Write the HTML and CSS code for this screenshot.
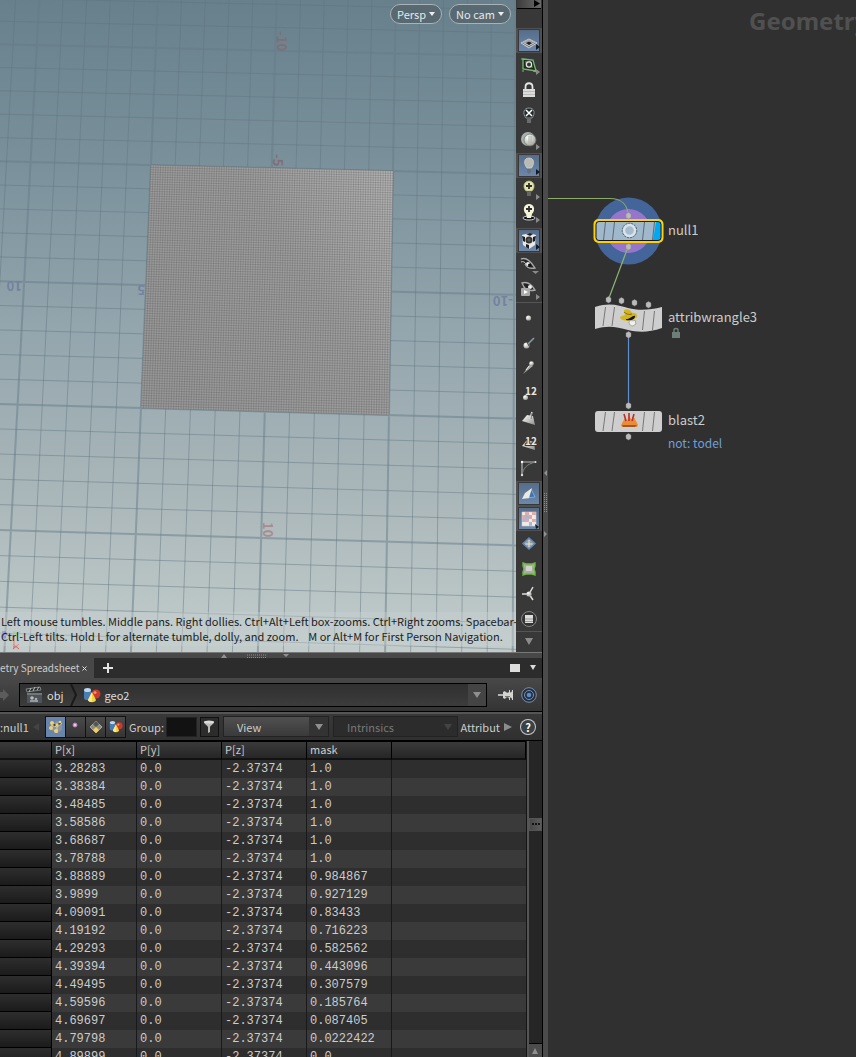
FILE: index.html
```html
<!DOCTYPE html>
<html lang="en">
<head>
<meta charset="utf-8">
<title>Geometry</title>
<link rel="stylesheet" href="styles.css">
</head>
<body>
<svg class="defs" width="0" height="0" aria-hidden="true">
  <defs>
    <linearGradient id="sky" x1="0" y1="0" x2="0" y2="1">
      <stop offset="0" stop-color="#67808c"/><stop offset=".25" stop-color="#7a919b"/>
      <stop offset=".5" stop-color="#93a5ad"/><stop offset=".75" stop-color="#a9b6b9"/>
      <stop offset="1" stop-color="#c2cccb"/>
    </linearGradient>
    <linearGradient id="sheet" x1="0" y1=".6" x2="1" y2="0">
      <stop offset="0" stop-color="#9a9a9a"/><stop offset=".55" stop-color="#9f9f9f"/><stop offset="1" stop-color="#b4b4b4"/>
    </linearGradient>
    <linearGradient id="metal" x1="0" y1="0" x2="1" y2="1">
      <stop offset="0" stop-color="#fff"/><stop offset="1" stop-color="#8c8c88"/>
    </linearGradient>
    <radialGradient id="ball" cx=".35" cy=".3" r=".8">
      <stop offset="0" stop-color="#fff"/><stop offset="1" stop-color="#96968f"/>
    </radialGradient>
    <symbol id="fly" viewBox="0 0 26 25"><path d="M20 16l4 3-4 3z"/></symbol>
    <symbol id="shapes" viewBox="0 0 18 16">
      <path d="M1 3v8c0 3 7 3 7 0V3z" fill="#4a7cb8"/><ellipse cx="4.500" cy="3" rx="3.500" ry="2" fill="#bcd8ee"/>
      <circle cx="13" cy="7" r="4.500" fill="#c93a2c"/><circle cx="12" cy="5.500" r="1.500" fill="#ee8c78"/>
      <path d="M9 5l4 8c-1 3-7 3-8 0z" fill="#f2d43c"/><path d="M9 5l0 10c-2 0-4-1-4-2z" fill="#fbeb90"/>
    </symbol>
  </defs>
</svg>
<div class="app">
  <section class="left">
    <div class="scene">
      <div class="viewport">
        <svg class="world" id="world" viewBox="0 0 516 652" preserveAspectRatio="xMinYMin slice">
          <rect width="516" height="652" fill="url(#sky)"/>
          <g id="grid"></g>
          <g id="mesh"></g>
          <g class="axis-x">
            <text transform="translate(277 31) rotate(90)">-10</text>
            <text transform="translate(273 154) rotate(90)">-5</text>
            <text transform="translate(263 522) rotate(90)" fill="#a98c8e">10</text>
          </g>
          <g class="axis-z">
            <text transform="translate(22 281) rotate(180)">10</text>
            <text transform="translate(145 285) rotate(180)">5</text>
            <text transform="translate(513 296) rotate(180)">-10</text>
          </g>
        </svg>
        <div class="cameras">
          <button class="pill">Persp<span class="caret"></span></button>
          <button class="pill">No cam<span class="caret"></span></button>
        </div>
        <svg class="gnomon" viewBox="0 0 24 22" width="24" height="22" fill="none">
          <path d="M12 7L1 7" stroke="#7a86e8"/><path d="M14 8v12" stroke="#f44"/><path d="M14 4l-1 4" stroke="#5fdc5f"/>
          <path d="M2 4h4l-4 5h4" stroke="#3b3bf0"/><path d="M14 3l3 4M20 3l-4 6" stroke="#6fdc6f"/><path d="M13 16l6 5M19 16l-6 5" stroke="#e25a5a"/>
        </svg>
        <p class="hint">Left mouse tumbles. Middle pans. Right dollies. Ctrl+Alt+Left box-zooms. Ctrl+Right zooms. Spacebar-<br>Ctrl-Left tilts. Hold L for alternate tumble, dolly, and zoom. &nbsp;&nbsp; M or Alt+M for First Person Navigation.</p>
      </div>
      <nav class="tools">
        <button class="expand" aria-label="Expand"><svg viewBox="0 0 24 8" width="24" height="8"><path d="M17 0l6 3.500-6 3.500z" fill="#000"/></svg></button>
        <div class="group">
          <button class="tool on" aria-label="Grid"><svg viewBox="0 0 26 25"><path d="M5 15l8-4 8 4-8 5z" fill="#6f767b" stroke="#ddd" stroke-width=".8"/><path d="M9 13l8 4.500M17 13l-8 4.500M7 14l8 4.500M11 12l8 4.500M15 12l-8 4.500M19 14l-8 4.500" stroke="#d4d4d4" stroke-width=".7"/><path d="M10 15l3-1.500 3 1.500-3 2z" fill="#222"/><use href="#fly" fill="#151a20"/></svg></button>
          <button class="tool" aria-label="Construction plane"><svg viewBox="0 0 26 25"><path d="M7 6l10 1 3 11-13-2z" fill="#1e2a1e" stroke="#79b870" stroke-width="1.300"/><path d="M9 8l6 0 2 7-7-1z" fill="#5d6b5e"/><circle cx="13" cy="11.500" r="2.600" fill="#2d3a2e" stroke="#e4e4e4" stroke-width="1.200"/><path d="M5 6l2 0M17 18l4 1M7 17v2" stroke="#79b870"/><use href="#fly" fill="#8a8a8a"/></svg></button>
          <button class="tool" aria-label="Lock"><svg viewBox="0 0 26 25"><path d="M9.500 12V9c0-5 7-5 7 0v3" fill="none" stroke="#e6e6e6" stroke-width="1.800"/><path d="M7 11h12v8H7z" fill="#dcdcda"/><path d="M7 13.500h12M7 16.500h12" stroke="#bbb"/></svg></button>
          <button class="tool" aria-label="No lights"><svg viewBox="0 0 26 25"><path d="M10 15C6 10 8 5 13 5s7 5 3 10z" fill="#252a2c" stroke="#8b9597"/><path d="M10 7l6 6M16 7l-6 6" stroke="#fff" stroke-width="1.500"/><path d="M11 16h4v4h-4z" fill="#6c6c6c"/></svg></button>
          <button class="tool" aria-label="Headlight"><svg viewBox="0 0 26 25"><circle cx="12" cy="11" r="7" fill="#a9b1ab"/><circle cx="14" cy="12" r="6" fill="url(#ball)" stroke="#68706a" stroke-width=".7"/><path d="M13 8v7M15 8v7" stroke="#aaa"/><use href="#fly" fill="#8a8a8a"/></svg></button>
          <button class="tool on" aria-label="Normal lighting"><svg viewBox="0 0 26 25"><path d="M11 15C7 10 8 5 13 5s6 5 2.500 10z" fill="#babab4" stroke="#d6d6d0" stroke-width=".7"/><path d="M11 16h4v3l-2 2-2-2z" fill="#6a7076"/><use href="#fly" fill="#151a20"/></svg></button>
          <button class="tool low" aria-label="High quality lighting"><svg viewBox="0 0 26 25"><path d="M10 13C6 9 8 3 13 3s7 6 3 10z" fill="#e4e5a8" stroke="#aaa875" stroke-width=".7"/><path d="M13 5v6M10 8h6" stroke="#303030" stroke-width="1.800"/><path d="M11 14h4v4h-4z" fill="#666"/><use href="#fly" fill="#8a8a8a"/></svg></button>
          <button class="tool low" aria-label="Lighting with shadows"><svg viewBox="0 0 26 25"><ellipse cx="13" cy="17" rx="6" ry="2" fill="#111" stroke="#d6d6d6"/><path d="M10 13C6 9 8 3 13 3s7 6 3 10l-1 4h-4z" fill="#f4f4d8"/><path d="M13 5v6M10 8h6" stroke="#303030" stroke-width="1.800"/><use href="#fly" fill="#8a8a8a"/></svg></button>
        </div>
        <div class="group">
          <button class="tool on" aria-label="Materials"><svg viewBox="0 0 26 25"><path d="M6 7l7-2 7 2-1 10-6 4-6-4z" fill="#e9e9e9"/><path d="M10 6l4-1 3 1-3 2zM6 8l3 1v5l-2-1zM17 9l3-1-1 5-2 1zM10 16l3 1v4l-3-2z" fill="#1d1d1d"/><circle cx="13" cy="12" r="3.500" fill="#333"/><circle cx="13" cy="12" r="1.800" fill="#555"/><use href="#fly" fill="#151a20"/></svg></button>
          <button class="tool" aria-label="Ghost objects"><svg viewBox="0 0 26 25"><path d="M5 6c5-2 9 1 14 9-5 1-8 0-10-4" fill="#222" stroke="#a9a9a9" stroke-width="1.400"/><path d="M5 9c2-1 4 0 5 2" fill="none" stroke="#ccc"/><circle cx="12" cy="11" r="2" fill="#eee"/><circle cx="13.500" cy="12" r="1.500" fill="#111"/><path d="M16 18h7l-3.500 3z" fill="#8a8a8a"/></svg></button>
          <button class="tool" aria-label="Render view"><svg viewBox="0 0 26 25"><path d="M6 5c6-2 10 2 13 7-4 1-8 1-11-3z" fill="#222" stroke="#aaa" stroke-width="1.400"/><circle cx="14" cy="9" r="2" fill="#eee"/><rect x="5" y="10" width="9" height="8" rx="1" fill="#aaa"/><path d="M8 12l4 2-4 2z" fill="#fff"/><use href="#fly" fill="#8a8a8a"/></svg></button>
        </div>
        <div class="group ruled">
          <button class="tool" aria-label="Points"><svg viewBox="0 0 26 25"><circle cx="12.500" cy="12" r="2.600" fill="url(#ball)"/></svg></button>
          <button class="tool" aria-label="Point normals"><svg viewBox="0 0 26 25"><path d="M11 14l7-7" stroke="#8a9a9e" stroke-width="1.600"/><circle cx="10.500" cy="14.500" r="3" fill="url(#ball)"/><path d="M11 11l2 4" stroke="#444"/></svg></button>
          <button class="tool" aria-label="Point trails"><svg viewBox="0 0 26 25"><path d="M7 18l7-10 3 2z" fill="#a4a4a0"/><path d="M10 14l3-4" stroke="#eee"/><circle cx="15.500" cy="7.500" r="2.300" fill="url(#ball)"/></svg></button>
          <button class="tool" aria-label="Point numbers"><svg viewBox="0 0 26 25"><circle cx="9.500" cy="16.500" r="2.500" fill="url(#ball)"/><text x="9" y="14" class="num">12</text></svg></button>
          <button class="tool" aria-label="Primitive normals"><svg viewBox="0 0 26 25"><path d="M11 9l6 1 2 9-13-4z" fill="url(#metal)"/><path d="M14 13l2-7" stroke="#d6dcdc" stroke-width="1.600"/><path d="M15 13l1-6" stroke="#555" stroke-width=".7"/></svg></button>
          <button class="tool" aria-label="Primitive numbers"><svg viewBox="0 0 26 25"><path d="M11 9l7 2 1 8-13-4z" fill="url(#metal)"/><text x="9" y="14" class="num cut">12</text></svg></button>
          <button class="tool" aria-label="Hulls"><svg viewBox="0 0 26 25"><path d="M6 19V6h14" fill="none" stroke="#b5b5b5" stroke-width="1.200"/><path d="M6 19C7 13 10 8 20 6" fill="none" stroke="#7d8888"/><circle cx="6" cy="6" r="1.200" fill="#fff"/><circle cx="19.500" cy="6" r="1" fill="#ddd"/><circle cx="6" cy="19" r="1.200" fill="#ddd"/></svg></button>
          <button class="tool on" aria-label="Back faces"><svg viewBox="0 0 26 25"><path d="M15 8l4 8-8 1z" fill="#3f74b4" stroke="#8db6e0" stroke-width=".8"/><path d="M6 18l3-6 7-5-3 10z" fill="#ece9df"/></svg></button>
          <button class="tool on" aria-label="Textures"><svg viewBox="0 0 26 25"><path d="M6 6h14v14H6z" fill="#f1ebe7"/><path d="M9 6h4v3H9zM16 6h4v3h-4zM6 9h3v4H6zM13 9h3v4h-3zM9 13h4v3H9zM16 13h4v3h-4z" fill="#e3a9a5"/><path d="M9 9h4v4H9zM6 13h3v3H6zM13 16h3v4h-3z" fill="#a3b9da"/><path d="M6 6h14v14H6z" fill="none" stroke="#d8cfcb" stroke-width=".6"/><path d="M19 18l4 3-3 2z" fill="#151a20"/></svg></button>
          <button class="tool" aria-label="Displacement"><svg viewBox="0 0 26 25"><path d="M7 12.500l6-5.500 6 5.500-6 5.500z" fill="#a4a9aa" stroke="#5c86b8" stroke-width="1.500"/><path d="M10 11l3-2 3 2 1 2-4 3-4-3z" fill="#9b9b98"/><path d="M13 9v7M9.500 13h7" stroke="#e6e6e6"/></svg></button>
          <button class="tool" aria-label="Subdivision"><svg viewBox="0 0 26 25"><path d="M7 7l3 1h6l3-1 0 3-1 3 1 3 0 3-3-1h-6l-3 1 0-3 1-3-1-3z" fill="#a9ada6" stroke="#6cb83c" stroke-width="1.400"/><path d="M10 10h6v5h-6z" fill="#cfd1cd"/></svg></button>
          <button class="tool" aria-label="Origin gnomon"><svg viewBox="0 0 26 25"><path d="M13 13H6M13 13l4-7M13 13l4 6" stroke="#dedede" stroke-width="1.500"/><circle cx="13" cy="13" r="2.600" fill="url(#ball)"/></svg></button>
          <button class="tool" aria-label="Display options"><svg viewBox="0 0 26 25"><circle cx="13" cy="13" r="7.500" fill="#333" stroke="#858585"/><path d="M9 9h8v8H9z" fill="#ddd"/><path d="M9 13h8M9 15.500h8" stroke="#999"/></svg></button>
        </div>
        <button class="more ruled" aria-label="More"><svg viewBox="0 0 26 20" width="26" height="20"><path d="M9 6h8l-4 7z" fill="#8c8c8c"/></svg></button>
      </nav>
    </div>

    <div class="hsplit"><svg viewBox="0 0 68 6" width="68" height="6"><path d="M0 5l3-4 3 4zM62 1h6l-3 3z" fill="#929292"/><path d="M26 2h20M26 4.500h20" stroke="#8c8c8c" stroke-dasharray="1 1"/></svg></div>

    <div class="tabs">
      <div class="tab"><span>etry Spreadsheet</span><button class="close" aria-label="Close tab"><svg viewBox="0 0 5 5" width="5" height="5"><path d="M.5 .5l4 4M4.500 .5l-4 4" stroke="#ddd"/></svg></button></div>
      <button class="add" aria-label="New tab"><svg viewBox="0 0 10 10" width="10" height="10"><path d="M5 0v10M0 5h10" stroke="#e4e4e4" stroke-width="2"/></svg></button>
      <svg class="panebtns" viewBox="0 0 28 10" width="28" height="10"><path d="M0 1h10v8H0z" fill="#dededc"/><path d="M20 2h6l-3 5z" fill="#dcdcdc"/></svg>
    </div>

    <div class="pathbar">
      <svg class="fwd" viewBox="0 0 12 16" width="12" height="16"><path d="M0 5h3V2l6 6-6 6v-3H0z" fill="#5c5c5c"/></svg>
      <div class="path">
        <button class="crumb"><svg viewBox="0 0 18 18" width="18" height="18"><path d="M1 3l14-2 1 3L2 6z" fill="#2a2d2d" stroke="#8f9696" stroke-width=".8"/><path d="M4 6l2-4M8 5l2-4M12 4l2-3" stroke="#b8bcbc"/><path d="M2 7h15v10H2z" fill="#4a545a"/><path d="M2 7h15v2H2z" fill="#6f7878"/><circle cx="7" cy="12" r="1.800" fill="#bbb"/><circle cx="11" cy="13" r="1.300" fill="#aaa"/><path d="M5 14h8v2H5z" fill="#999"/></svg><span>obj</span></button>
        <svg class="chev" viewBox="0 0 8 22" width="8" height="22"><path d="M1 0l5 11-5 11" fill="none" stroke="#1a1a1a" stroke-width="2"/></svg>
        <button class="crumb"><svg viewBox="0 0 18 16" width="18" height="16"><use href="#shapes"/></svg><span>geo2</span></button>
        <button class="drop" aria-label="Path history"><span class="down"></span></button>
      </div>
      <svg class="pin" viewBox="0 0 16 14" width="16" height="14"><path d="M0 7h6" stroke="#ddd" stroke-width="1.500"/><path d="M5 4l2-1c1 2 3 2 4 1V2h1v2c1 1 2 0 2-2h1v10h-1c0-2-1-3-2-2v2h-1v-2c-1-1-3-1-4 1l-2-1z" fill="#d4d4d0"/><path d="M7 8h5v1H7z" fill="#777"/></svg>
      <svg class="target" viewBox="0 0 16 16" width="16" height="16"><circle cx="8" cy="8" r="7.300" fill="#252f3c" stroke="#7490b4"/><circle cx="8" cy="8" r="4.500" fill="none" stroke="#7893b6"/><circle cx="8" cy="8" r="2.300" fill="#5a8cd0"/></svg>
    </div>

    <div class="attrbar">
      <span class="node">:null1</span><span class="back"></span>
      <div class="modes">
        <button class="mode on" aria-label="Points"><svg viewBox="0 0 18 18" width="18" height="18"><path d="M4 7l6-4 5 2v7l-5 3-6-3z" fill="#8e949a"/><path d="M4 7l6 2 5-4M10 9v6" stroke="#c9cdd0"/><g fill="#f0cf70"><circle cx="5" cy="5" r="2"/><circle cx="10" cy="7" r="1.800"/><circle cx="4" cy="10" r="2"/><circle cx="9" cy="13" r="2"/><circle cx="13" cy="4" r="1.300"/></g></svg></button>
        <button class="mode" aria-label="Vertices"><svg viewBox="0 0 18 18" width="18" height="18"><circle cx="8" cy="7" r="2" fill="#eac6e8" stroke="#b27db2"/></svg></button>
        <button class="mode" aria-label="Primitives"><svg viewBox="0 0 18 18" width="18" height="18"><path d="M3 9l6-6 6 6-6 6z" fill="#8c8c80" stroke="#b9b9ac" stroke-width=".8"/><path d="M9 3l3 3-3 3-3-3z" fill="#55554f"/><path d="M9 9l3 3-3 3-3-3z" fill="#f4cf55"/></svg></button>
        <button class="mode" aria-label="Detail"><svg viewBox="0 0 18 16" width="14" height="13"><use href="#shapes"/></svg></button>
      </div>
      <label class="grouplabel" for="group">Group:</label><input class="groupin" id="group" type="text">
      <button class="mode filter" aria-label="Filter"><svg viewBox="0 0 18 18" width="18" height="18"><path d="M4 4h10c0 2-3 3-4 5v5l-2 1V9C7 7 4 6 4 4z" fill="#b9b9b7"/><ellipse cx="9" cy="4" rx="5" ry="1.500" fill="#dcdcda"/></svg></button>
      <div class="pick view"><select aria-label="View"><option>View</option></select><span class="down"></span></div>
      <div class="pick off"><select aria-label="Intrinsics" disabled><option>Intrinsics</option></select><span class="down"></span></div>
      <span class="attr">Attribut</span><span class="right"></span>
      <button class="help" aria-label="Help">?</button>
    </div>

    <div class="sheet">
      <div class="clip">
      <table>
        <thead><tr><th></th><th>P[x]</th><th>P[y]</th><th>P[z]</th><th>mask</th><th></th></tr></thead>
        <tbody>
          <tr><th></th><td>3.28283</td><td>0.0</td><td>-2.37374</td><td>1.0</td><td></td></tr>
          <tr><th></th><td>3.38384</td><td>0.0</td><td>-2.37374</td><td>1.0</td><td></td></tr>
          <tr><th></th><td>3.48485</td><td>0.0</td><td>-2.37374</td><td>1.0</td><td></td></tr>
          <tr><th></th><td>3.58586</td><td>0.0</td><td>-2.37374</td><td>1.0</td><td></td></tr>
          <tr><th></th><td>3.68687</td><td>0.0</td><td>-2.37374</td><td>1.0</td><td></td></tr>
          <tr><th></th><td>3.78788</td><td>0.0</td><td>-2.37374</td><td>1.0</td><td></td></tr>
          <tr><th></th><td>3.88889</td><td>0.0</td><td>-2.37374</td><td>0.984867</td><td></td></tr>
          <tr><th></th><td>3.9899</td><td>0.0</td><td>-2.37374</td><td>0.927129</td><td></td></tr>
          <tr><th></th><td>4.09091</td><td>0.0</td><td>-2.37374</td><td>0.83433</td><td></td></tr>
          <tr><th></th><td>4.19192</td><td>0.0</td><td>-2.37374</td><td>0.716223</td><td></td></tr>
          <tr><th></th><td>4.29293</td><td>0.0</td><td>-2.37374</td><td>0.582562</td><td></td></tr>
          <tr><th></th><td>4.39394</td><td>0.0</td><td>-2.37374</td><td>0.443096</td><td></td></tr>
          <tr><th></th><td>4.49495</td><td>0.0</td><td>-2.37374</td><td>0.307579</td><td></td></tr>
          <tr><th></th><td>4.59596</td><td>0.0</td><td>-2.37374</td><td>0.185764</td><td></td></tr>
          <tr><th></th><td>4.69697</td><td>0.0</td><td>-2.37374</td><td>0.087405</td><td></td></tr>
          <tr><th></th><td>4.79798</td><td>0.0</td><td>-2.37374</td><td>0.0222422</td><td></td></tr>
          <tr><th></th><td>4.89899</td><td>0.0</td><td>-2.37374</td><td>0.0</td><td></td></tr>
        </tbody>
      </table>
      </div>
      <div class="scroll"><div class="thumb"><svg viewBox="0 0 11 11" width="11" height="11"><path d="M2 5h2M5 5h2M8 5h2" stroke="#000" stroke-width="1.500"/></svg></div><button class="up" aria-label="Scroll up"><svg viewBox="0 0 12 12" width="12" height="12"><path d="M6 3l3 6H3z" fill="#8f8f8f"/></svg></button></div>
    </div>
  </section>

  <div class="vsplit"><svg viewBox="0 0 5 68" width="5" height="68"><path d="M4 1v6L1 4zM1 62v6l3-3z" fill="#929292"/><path d="M1.500 24v20M3.500 24v20" stroke="#8c8c8c" stroke-dasharray="1 1"/></svg></div>

  <section class="network">
    <h1>Geometry</h1>
    <svg class="graph">
      <g transform="translate(-548 0)">
        <circle cx="628.500" cy="231" r="33.500" fill="#44659a"/><circle cx="628.500" cy="231" r="22" fill="#9676cc"/>
        <path d="M548 198.500h62c11 0 17 6 18 15" fill="none" stroke="#8aac68" stroke-width="1.200"/>
        <path d="M628 247l-19 51" stroke="#8fb573" stroke-width="1.200"/><path d="M628.500 335v70" stroke="#5c8fce" stroke-width="1.200"/>
        <rect x="594.500" y="220" width="68" height="22" rx="4" fill="#9fb8cb" stroke="#ffd100" stroke-width="2"/>
        <path d="M656 222h5v18h-8z" fill="#00a8f4"/>
        <rect x="596" y="221.500" width="65" height="19" rx="3" fill="none" stroke="#16161c"/>
        <path d="M605.500 222l-2 18M614.500 222l-2 18M644.500 222l-2 18M654.500 222l-2 18" stroke="#5d6b78"/>
        <circle cx="629.500" cy="230.500" r="5.500" fill="#a4bccf" stroke="#dce3e8" stroke-width="2.400"/><circle cx="629.500" cy="230.500" r="7.300" fill="none" stroke="#59636c" stroke-dasharray="2 1"/>
        <path d="M595 307c16-5 24-1 33 1 11 3 22 2 34-1v21c-14 5-25 4-34 2-11-3-20-5-33-1z" fill="#cecece"/>
        <path d="M605.500 307l-2.500 19M614.500 307l-2.500 19M644.500 311l-2 19M654.500 311l-2 19" stroke="#777"/>
        <path d="M624 310c3-2 7 0 8 3 4-1 7 3 4 5-4 3-13 4-16 0 0-2 3-2 5-3z" fill="#d4b61a"/><path d="M626 319c3 1 7-4 9-3 0 4-5 5-9 4z" fill="#171510"/><path d="M624 312c2 2 5 3 8 2" stroke="#806b14" fill="none"/><path d="M629 322c1-3 4 0 6-2l1 4-3 2c-2 0-4-1-4-4z" fill="#f1f1ea" stroke="#8f8f84" stroke-width=".7"/>
        <rect x="595" y="411" width="67" height="21" rx="3" fill="#cecece"/>
        <path d="M605.500 412l-2.500 19M614.500 412l-2.500 19M644.500 412l-2 19M654.500 412l-2 19" stroke="#777"/>
        <path d="M621 425l4-7 2 3 2-5 3 4 2-3 4 8-1 2h-15z" fill="#ec8c36"/><path d="M624 414l2 7M629 413v8M634 414l-2 7" stroke="#b7302f" stroke-width="1.600"/><path d="M622 425h15l-2 2h-12z" fill="#9e5a26"/>
        <g fill="#bababa" stroke="#888" stroke-width=".4">
          <path id="plug" d="M626 214l2.500-1.500 2.500 1.500v3.500l-2.500 1.500-2.500-1.500z"/>
          <use href="#plug" y="31"/><use href="#plug" x="-20" y="84"/><use href="#plug" x="-7" y="85"/><use href="#plug" x="6" y="87"/><use href="#plug" x="20" y="89"/>
          <use href="#plug" y="119"/><use href="#plug" y="190"/><use href="#plug" y="221"/>
        </g>
        <path d="M672 332h8v6h-8z" fill="#6c7f79"/><path d="M674 332v-2c0-2 4-2 4 0v2" fill="none" stroke="#6c7f79" stroke-width="1.400"/>
        <text x="668" y="235">null1</text><text x="668" y="322">attribwrangle3</text><text x="668" y="425">blast2</text>
        <text x="668" y="448" class="note">not: todel</text>
      </g>
    </svg>
  </section>
</div>
<script src="scene.js"></script>
</body>
</html>
```
FILE: styles.css
```css
* { box-sizing: border-box; }
body { margin: 0; background: #303030; color: #ccc; font-family: "Noto Sans CJK SC", "Noto Sans", sans-serif; font-size: 11px; line-height: 16px; }
button, input, select { font: inherit; color: inherit; margin: 0; padding: 0; border: 0; background: none; }
svg { display: block; flex: none; }
.defs { position: absolute; }
.app { display: grid; grid-template-columns: minmax(0, 543fr) 5px minmax(0, 308fr); height: 100vh; overflow: hidden; }
.left { display: flex; flex-direction: column; min-width: 0; min-height: 0; border-right: 1px solid #000; background: #2e2e2e; }

.scene { flex: 652 0 0; min-height: 0; display: flex; }
.viewport { position: relative; flex: 1; min-width: 0; overflow: hidden; background: #c2cccb; }
.world { width: 100%; height: 100%; }
.world text { font: 700 13px "Noto Sans CJK SC", sans-serif; }
.axis-x { fill: #806e78; }
.axis-z { fill: #74829e; }
.cameras { position: absolute; top: 4px; right: 5px; display: flex; gap: 7px; }
.pill { display: flex; align-items: center; gap: 3px; height: 20px; padding: 0 6px; border: 1px solid #a9b2b6; border-radius: 10px; background: #586972; color: #e4e8ea; line-height: 18px; }
.caret { border: 3px solid transparent; border-top: 4px solid #eee; border-bottom: 0; }
.hint { position: absolute; left: 0; right: 0; bottom: 6px; margin: 0; padding: 2px 1px; background: #c8d2d166; color: #1c2223; line-height: 15px; white-space: nowrap; }
.gnomon { position: absolute; left: 0; bottom: 2px; }

.tools { width: 26px; flex: none; display: flex; flex-direction: column; background: #383838; overflow: hidden; }
.expand { height: 9px; margin: 0 1px 19px; border-bottom: 1px solid #000; background: linear-gradient(90deg, #3c3c3c, #6a6a6a); }
.group { display: flex; flex-direction: column; margin-bottom: 4px; }
.group:last-of-type { margin-bottom: 0; }
.group.ruled { margin-top: -5px; padding-top: 3px; }
.ruled { border-top: 1px solid #555; }
.tool { height: 25px; flex: none; }
.tool svg { width: 26px; height: 25px; }
.tool.low { height: 23px; }
.tool.on { background: linear-gradient(#566d8a, #6b87aa) content-box #292929; border: 1px solid #505050; border-width: 1px 2px; padding: 1px; }
.tool.on svg { margin: -2px -3px; }
.num { font: 700 10px "Noto Sans CJK SC", sans-serif; fill: #e8e8e4; }
.num.cut { stroke: #383838; stroke-width: 2px; paint-order: stroke; }
.more { height: 20px; }

.hsplit { height: 6px; flex: none; display: flex; justify-content: center; background: #484848; border-top: 1px solid #777; padding-right: 32px; }
.vsplit { display: flex; align-items: center; background: #4b4b4b; padding-bottom: 52px; }

.tabs { height: 20px; flex: none; display: flex; align-items: center; background: #2c2c2c; padding-right: 4px; }
.tab { display: flex; align-items: center; gap: 3px; height: 20px; width: 94px; background: #484848; font-size: 10px; white-space: nowrap; }
.add { margin-left: 9px; }
.panebtns { margin-left: auto; }

.pathbar { height: 34px; flex: none; display: flex; align-items: center; padding-right: 5px; background: linear-gradient(#484848, #343434); border-bottom: 1px solid #000; }
.fwd { margin-right: 7px; }
.path { flex: 1; min-width: 0; height: 24px; display: flex; align-items: center; border: 1px solid #000; background: linear-gradient(#303030, #3c3c3c); }
.crumb { display: flex; align-items: center; gap: 4px; padding-left: 5px; line-height: 18px; color: #ddd; }
.chev { margin-left: 6px; }
.drop { margin-left: auto; width: 18px; height: 22px; display: flex; align-items: center; justify-content: center; background: #444; }
.down { border: 4px solid transparent; border-top: 6px solid #8f8f8f; border-bottom: 0; pointer-events: none; }
.pin { margin: 0 6px 0 11px; }
.target { margin-left: 1px; }

.attrbar { height: 29px; flex: none; display: flex; align-items: center; padding: 0 7px 1px 0; background: linear-gradient(#383838, #303030); border-top: 2px solid #555; border-bottom: 1px solid #000; white-space: nowrap; }
.node { width: 28px; }
.back { border: 4px solid transparent; border-right: 6px solid #444; border-left: 0; margin: 0 6px 0 5px; }
.modes { display: flex; border: 1px solid #111; gap: 1px; background: #111; }
.mode { width: 19px; height: 20px; display: flex; align-items: center; justify-content: center; background: linear-gradient(#4a4a4a, #353535); }
.mode.on { background: #6886ac; }
.grouplabel { margin: 0 2px 0 3px; }
.groupin { width: 31px; height: 20px; background: #121212; border: 1px solid #222; padding: 0 3px; }
.filter { margin: 0 4px 0 3px; border: 1px solid #111; background: #2c2c2c; }
.pick { position: relative; width: 106px; height: 21px; display: flex; border: 1px solid #222; background: linear-gradient(#505050, #3a3a3a); }
.pick select { flex: 1; min-width: 0; appearance: none; padding-left: 13px; opacity: 1; color: #ccc; }
.pick .down { position: absolute; right: 5px; top: 7px; }
.pick.view { background: linear-gradient(90deg, transparent 85px, #333 85px), linear-gradient(#505050, #3a3a3a); }
.pick.off { flex: 1; min-width: 90px; margin: 0 3px 0 4px; background: #2c2c2c; }
.pick.off select { color: #777; }
.pick.off .down { border-top-color: #444; }
.right { border: 4px solid transparent; border-left: 8px solid #8c8c8c; border-right: 0; margin: 0 9px 0 4px; }
.help { width: 14px; height: 14px; border-radius: 7px; background: #3a4245; box-shadow: 0 0 0 1px #ccc; color: #fff; font-weight: 700; line-height: 14px; }

.sheet { flex: 316 0 0; min-height: 0; display: flex; overflow: hidden; }
.clip { flex: 1; min-width: 0; overflow: hidden; border-right: 1px solid #151515; }
table { width: 100%; table-layout: fixed; border-collapse: separate; border-spacing: 0; }
th, td { padding: 0 0 0 3px; text-align: left; font-weight: 400; white-space: nowrap; }
thead th { height: 19px; line-height: 14px; vertical-align: top; background: linear-gradient(#3a3a3a, #262626); border-top: 1px solid #000; border-right: 1px solid #000; border-bottom: 2px solid #111; }
thead th:nth-child(1) { width: 52px; }
thead th:nth-child(n+2):nth-child(-n+5) { width: 85px; }
tbody td { height: 18px; border-right: 1px solid #191919; background: #2e2e2e; font: 12px/18px "Liberation Mono", monospace; }
tbody td:last-child { border-right: 0; }
tbody tr:nth-child(even) td { background: #3a3a3a; }
tbody th { background: linear-gradient(#2e2e2e, #1b1b1b); border-bottom: 1px solid #000; border-right: 1px solid #000; }
.scroll { width: 15px; flex: none; display: flex; flex-direction: column; align-items: center; border-left: 2px solid #555; background: #262626; }
.thumb { width: 13px; height: 13px; margin-top: 77px; border: 1px solid #555; background: linear-gradient(90deg, #484848, #5c5c5c); }
.up { margin-top: auto; width: 13px; height: 14px; background: #4c4c4c; border-top: 1px solid #000; }

.network { position: relative; min-width: 0; overflow: hidden; background: #303030; }
.network h1 { position: absolute; left: 201px; top: 6px; margin: 0; font: 700 24px/30px "Noto Sans", sans-serif; color: #505050; }
.graph { width: 100%; height: 100%; font-size: 13px; fill: #ccc; }
.graph .note { fill: #6f9fdc; font-size: 12px; }
```
FILE: scene.js
```js
const NS = 'http://www.w3.org/2000/svg';

// Perspective projection of the ground plane; (0,0)-(1,1) covers the 10x10 unit sheet.
const corners = [[151, 165], [393, 171], [389, 415], [141, 408]];
const [[x0, y0], [x1, y1], [x2, y2], [x3, y3]] = corners;
const dx1 = x1 - x2, dx2 = x3 - x2, sx = x0 - x1 + x2 - x3;
const dy1 = y1 - y2, dy2 = y3 - y2, sy = y0 - y1 + y2 - y3;
const det = dx1 * dy2 - dx2 * dy1;
const g = (sx * dy2 - dx2 * sy) / det;
const h = (dx1 * sy - sx * dy1) / det;

function project(u, v) {
  const w = g * u + h * v + 1;
  const x = (x1 - x0 + g * x1) * u + (x3 - x0 + h * x3) * v + x0;
  const y = (y1 - y0 + g * y1) * u + (y3 - y0 + h * y3) * v + y0;
  return (x / w).toFixed(1) + ' ' + (y / w).toFixed(1);
}

function add(parent, d, attrs) {
  const path = document.createElementNS(NS, 'path');
  path.setAttribute('d', d);
  for (const key in attrs) path.setAttribute(key, attrs[key]);
  parent.appendChild(path);
}

const grid = document.getElementById('grid');
let thin = '', thick = '';
for (let i = -15; i <= 25; i++) {
  const t = i / 10;
  const d = `M${project(t, -1.5)}L${project(t, 2.5)}M${project(-1.5, t)}L${project(2.5, t)}`;
  if (i % 5 === 0) thick += d; else thin += d;
}
add(grid, thin, { stroke: '#60747f', 'stroke-opacity': 0.45, fill: 'none' });
add(grid, thick, { stroke: '#667b88', 'stroke-opacity': 0.5, 'stroke-width': 2, fill: 'none' });

const mesh = document.getElementById('mesh');
add(mesh, `M${project(0, 0)}L${project(1, 0)}L${project(1, 1)}L${project(0, 1)}Z`, { fill: 'url(#sheet)' });
let wires = '';
for (let i = 0; i <= 99; i++) {
  const t = i / 99;
  wires += `M${project(t, 0)}L${project(t, 1)}M${project(0, t)}L${project(1, t)}`;
}
add(mesh, wires, { stroke: '#505050', 'stroke-opacity': 0.35, 'stroke-width': 0.7, fill: 'none' });
```
